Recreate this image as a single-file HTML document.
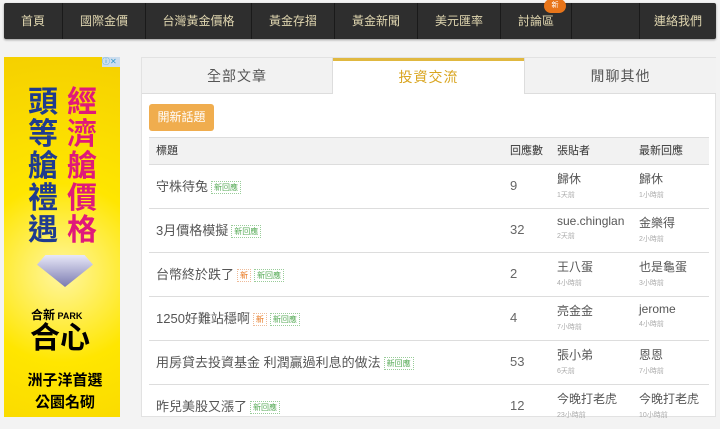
<!DOCTYPE html>
<html><head><meta charset="utf-8"><style>
*{margin:0;padding:0;box-sizing:border-box}
body{width:720px;height:429px;overflow:hidden;background:#f3f3f3;font-family:"Liberation Sans","Noto Sans CJK TC",sans-serif;position:relative}
.nav{position:absolute;left:4px;top:3px;width:712px;height:36px;background:#2e2e2e;border-radius:2px;box-shadow:0 1px 2px #999}
.nav div{position:absolute;top:0;height:36px;line-height:36px;text-align:center;color:#e0d6b0;font-size:12px;border-right:1px solid #1a1a1a}
.badge{position:absolute;left:540px;top:-4px;width:22px;height:14px;background:#e8751a;border-radius:7px;color:#fff;font-size:7px;text-align:center;line-height:14px}
.ad{position:absolute;left:4px;top:57px;width:116px;height:360px;background:radial-gradient(circle at 50% 60%,#fff6a0 0,#ffe600 40%,#f5d000 100%);overflow:hidden}
.ad .v{position:absolute;font-weight:bold;font-size:30px;line-height:32px;width:36px;text-align:center}
.panel{position:absolute;left:141px;top:57px;width:575px;height:360px;background:#fff;border:1px solid #e2e2e2}
.tab{position:absolute;top:0;height:36px;line-height:36px;text-align:center;font-size:14px;color:#555;background:#f2f2f2;border-bottom:1px solid #ddd;letter-spacing:1px}
.btn{position:absolute;left:7px;top:46px;width:65px;height:27px;background:#f0ad4e;border-radius:3px;color:#fff;font-size:12px;line-height:27px;text-align:center}
.row{position:absolute;left:7px;width:560px;border-top:1px solid #ddd;font-size:12px;color:#555}
.row .t{position:absolute;left:7px;font-size:13px}
.row .n{position:absolute;left:361px;font-size:13px;color:#666}
.row .p{position:absolute;left:408px;top:5px}
.row .l{position:absolute;left:490px;top:5px}
.s{display:block;font-size:7px;color:#aaa;margin-top:3px}
.g{font-size:8px;color:#5a5;border:1px dotted #9c9;padding:1px 2px;margin-left:3px;vertical-align:middle}
.o{font-size:8px;color:#e8751a;border:1px dotted #eb9;padding:1px 2px;margin-left:3px;vertical-align:middle}
</style></head><body>
<div class="nav">
<div style="left:0;width:59px">首頁</div>
<div style="left:59px;width:83px">國際金價</div>
<div style="left:142px;width:106px">台灣黃金價格</div>
<div style="left:248px;width:83px">黃金存摺</div>
<div style="left:331px;width:83px">黃金新聞</div>
<div style="left:414px;width:83px">美元匯率</div>
<div style="left:497px;width:71px">討論區</div>
<div style="left:568px;width:68px"></div>
<div style="left:636px;width:76px;border:0">連絡我們</div>
<span class="badge">新</span>
</div>
<div class="ad">
<div class="v" style="left:60px;top:30px;color:#e0197a">經濟艙價格</div>
<div class="v" style="left:21px;top:30px;color:#1f3b8f">頭等艙禮遇</div>
<div style="position:absolute;left:33px;top:198px;width:56px;height:32px;background:linear-gradient(#e8e8f8,#7a7ab0);clip-path:polygon(15% 0,85% 0,100% 30%,50% 100%,0 30%)"></div>
<div style="position:absolute;left:27px;top:249px;font-size:12px;font-weight:bold">合新<span style="font-size:9px"> PARK</span></div>
<div style="position:absolute;left:26px;top:264px;font-size:30px;font-weight:bold;line-height:36px">合心</div>
<div style="position:absolute;left:13px;top:313px;font-size:15px;font-weight:bold;line-height:22px;text-align:center;width:96px">洲子洋首選<br>公園名砌</div>
<div style="position:absolute;right:0;top:0;width:18px;height:10px;background:#cde;font-size:8px;color:#39c;line-height:10px">ⓘ✕</div>
</div>
<div class="panel">
<div class="tab" style="left:0;width:191px;border-right:1px solid #ddd">全部文章</div>
<div class="tab" style="left:191px;width:191px;background:#fff;border-top:3px solid #e0b840;border-bottom:0;color:#d9a520;line-height:32px">投資交流</div>
<div class="tab" style="left:382px;width:192px;border-left:1px solid #ddd">閒聊其他</div>
<div class="btn">開新話題</div>
<div class="row" style="top:79px;height:27px;background:#f2f2f2;color:#333;font-size:11px;line-height:26px">
<span style="position:absolute;left:7px">標題</span><span style="position:absolute;left:361px">回應數</span><span style="position:absolute;left:408px">張貼者</span><span style="position:absolute;left:490px">最新回應</span></div>
<div class="row" style="top:106px;height:44px"><span class="t" style="top:11px">守株待兔<span class="g">新回應</span></span><span class="n" style="top:13px">9</span><span class="p">歸休<span class="s">1天前</span></span><span class="l">歸休<span class="s">1小時前</span></span></div>
<div class="row" style="top:150px;height:44px"><span class="t" style="top:11px">3月價格模擬<span class="g">新回應</span></span><span class="n" style="top:13px">32</span><span class="p">sue.chinglan<span class="s">2天前</span></span><span class="l">金樂得<span class="s">2小時前</span></span></div>
<div class="row" style="top:194px;height:44px"><span class="t" style="top:11px">台幣終於跌了<span class="o">新</span><span class="g">新回應</span></span><span class="n" style="top:13px">2</span><span class="p">王八蛋<span class="s">4小時前</span></span><span class="l">也是龜蛋<span class="s">3小時前</span></span></div>
<div class="row" style="top:238px;height:44px"><span class="t" style="top:11px">1250好難站穩啊<span class="o">新</span><span class="g">新回應</span></span><span class="n" style="top:13px">4</span><span class="p">亮金金<span class="s">7小時前</span></span><span class="l">jerome<span class="s">4小時前</span></span></div>
<div class="row" style="top:282px;height:44px"><span class="t" style="top:11px">用房貸去投資基金 利潤贏過利息的做法<span class="g">新回應</span></span><span class="n" style="top:13px">53</span><span class="p">張小弟<span class="s">6天前</span></span><span class="l">恩恩<span class="s">7小時前</span></span></div>
<div class="row" style="top:326px;height:33px"><span class="t" style="top:11px">昨兒美股又漲了<span class="g">新回應</span></span><span class="n" style="top:13px">12</span><span class="p">今晚打老虎<span class="s">23小時前</span></span><span class="l">今晚打老虎<span class="s">10小時前</span></span></div>
</div>
</body></html>
